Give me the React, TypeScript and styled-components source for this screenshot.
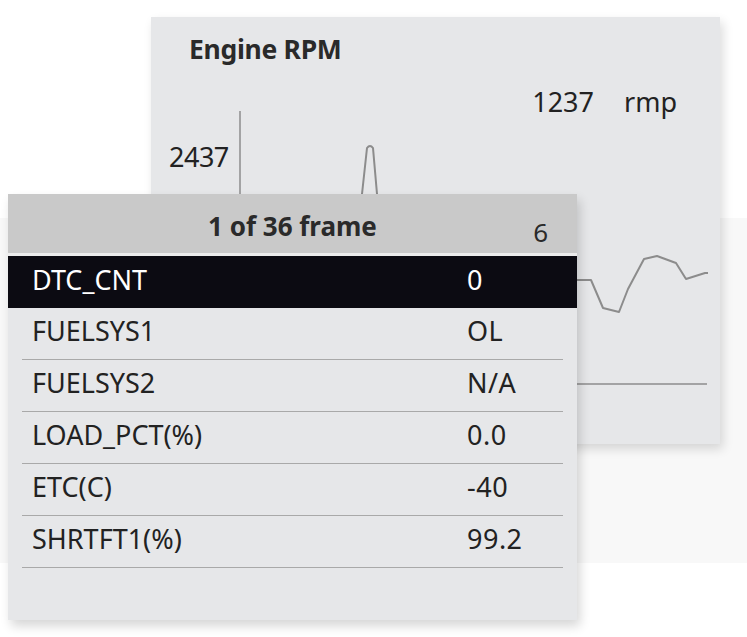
import React from "react";
import styled, { createGlobalStyle } from "styled-components";

const GlobalStyle = createGlobalStyle`
  html, body {
    margin: 0;
    padding: 0;
    background: #ffffff;
  }
  body {
    font-family: "Noto Sans", "DejaVu Sans", sans-serif;
    color: #222222;
  }
`;

const Stage = styled.div`
  position: relative;
  width: 747px;
  height: 637px;
  overflow: hidden;
  background: #ffffff;
`;

const Band = styled.div`
  position: absolute;
  left: 0;
  right: 0;
  top: 218px;
  height: 345px;
  background: #f8f8f8;
`;

// back window: the rpm chart
const ChartCard = styled.div`
  position: absolute;
  left: 151px;
  top: 17px;
  width: 569px;
  height: 427px;
  background: #e6e7e9;
  box-shadow: 3px 5px 10px rgba(0, 0, 0, 0.14);
  box-sizing: border-box;
  padding: 15px 0 0 38px;
`;

const ChartTitle = styled.div`
  font-size: 26.5px;
  font-weight: 700;
  line-height: 34px;
  color: #2a2a2a;
  letter-spacing: -0.3px;
`;

const Reading = styled.div`
  display: flex;
  justify-content: flex-end;
  gap: 30px;
  padding-right: 43px;
  margin-top: 18px;
  font-size: 27px;
  line-height: 36px;
`;

const AxisLabel = styled.div`
  margin: 19px 0 0 -20px;
  font-size: 27px;
  line-height: 36px;
  letter-spacing: -0.5px;
`;

const ChartDrawing = styled.svg`
  position: absolute;
  left: 0;
  top: 0;
  pointer-events: none;
`;

// front window: frame list
const FramePanel = styled.div`
  position: absolute;
  left: 8px;
  top: 194px;
  width: 569px;
  height: 426px;
  background: #e6e7e9;
  box-shadow: 3px 6px 10px rgba(0, 0, 0, 0.16);
  display: flex;
  flex-direction: column;
`;

const FrameHeader = styled.div`
  position: relative;
  height: 62px;
  flex-shrink: 0;
  box-sizing: border-box;
  padding-top: 5px;
  background: #c9c9c9;
  display: flex;
  align-items: center;
  justify-content: center;
  font-size: 26px;
  font-weight: 700;
  color: #2a2a2a;
  border-bottom: 3px solid #ececec;
`;

const HeaderStray = styled.span`
  position: absolute;
  right: 29px;
  top: 20px;
  font-size: 26px;
  font-weight: 400;
`;

const Row = styled.div<{ $active?: boolean }>`
  height: 52px;
  flex-shrink: 0;
  box-sizing: border-box;
  display: flex;
  align-items: center;
  margin: ${(p) => (p.$active ? "0" : "0 14px")};
  padding: ${(p) => (p.$active ? "0 24px 6px" : "0 10px 6px")};
  background: ${(p) => (p.$active ? "#0c0b12" : "transparent")};
  color: ${(p) => (p.$active ? "#ffffff" : "#222222")};
  border-bottom: ${(p) => (p.$active ? "none" : "1px solid #a9a9a9")};
  font-size: 27px;
`;

const RowName = styled.span`
  width: 435px;
`;

const RowValue = styled.span`
  letter-spacing: 0.5px;
`;

const rows = [
  { name: "DTC_CNT", value: "0" },
  { name: "FUELSYS1", value: "OL" },
  { name: "FUELSYS2", value: "N/A" },
  { name: "LOAD_PCT(%)", value: "0.0" },
  { name: "ETC(C)", value: "-40" },
  { name: "SHRTFT1(%)", value: "99.2" },
];

const rpmLine =
  "M89 250 L130 248 L160 240 L190 232 L205 215 L211 177 L216 131 Q219 127 222 131 L226 177 L235 230 L260 262 L300 270 L340 255 L380 262 L426 263 L440 263 L452 291 L468 295 L477 272 L493 242 L506 239 L525 246 L535 262 L554 256 L557 256";

const App: React.FC = () => {
  return (
    <Stage>
      <GlobalStyle />
      <Band />
      <ChartCard>
        <ChartDrawing width="569" height="427" viewBox="0 0 569 427">
          <line x1="89" y1="94" x2="89" y2="367" stroke="#8c8c8c" strokeWidth="1.5" />
          <line x1="89" y1="367" x2="556" y2="367" stroke="#8c8c8c" strokeWidth="1.5" />
          <path d={rpmLine} fill="none" stroke="#8c8c8c" strokeWidth="2" strokeLinejoin="round" />
        </ChartDrawing>
        <ChartTitle>Engine RPM</ChartTitle>
        <Reading>
          <span>1237</span>
          <span>rmp</span>
        </Reading>
        <AxisLabel>2437</AxisLabel>
      </ChartCard>
      <FramePanel>
        <FrameHeader>
          1 of 36 frame
          <HeaderStray>6</HeaderStray>
        </FrameHeader>
        {rows.map((r, i) => (
          <Row key={r.name} $active={i === 0}>
            <RowName>{r.name}</RowName>
            <RowValue>{r.value}</RowValue>
          </Row>
        ))}
      </FramePanel>
    </Stage>
  );
};

export default App;
